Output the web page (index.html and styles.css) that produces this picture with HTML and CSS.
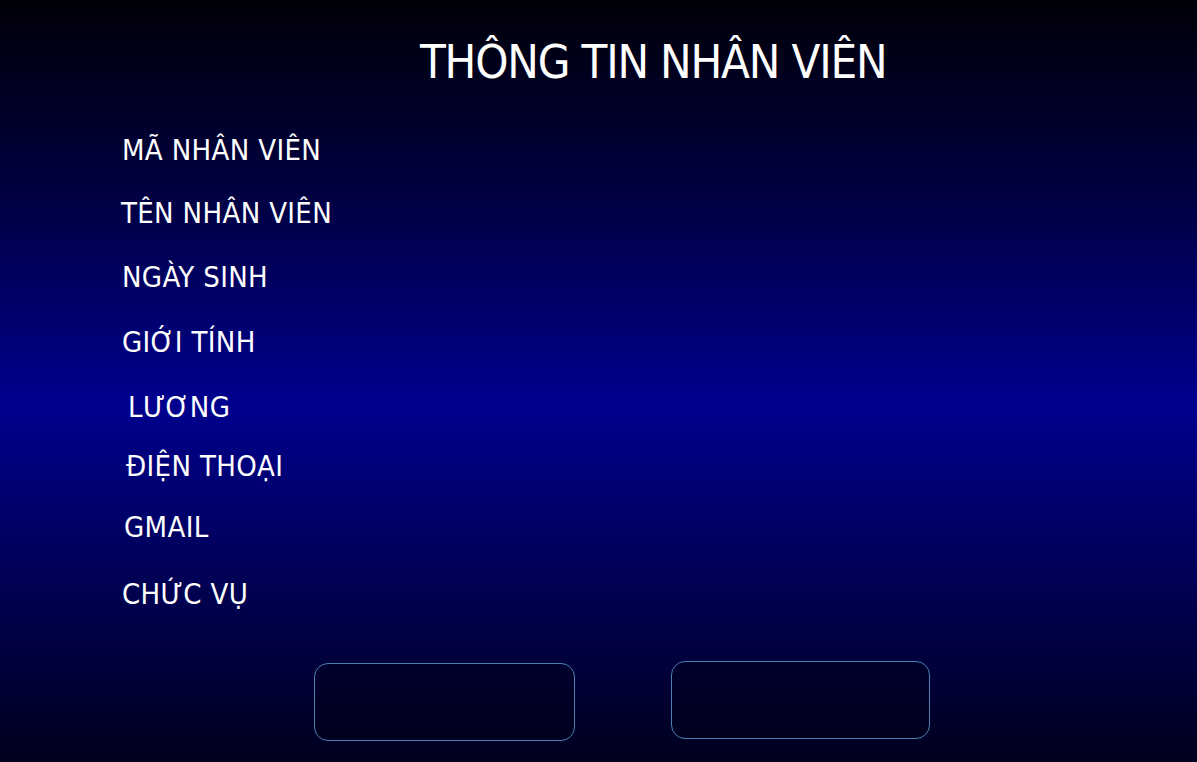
FILE: index.html
```html
<!DOCTYPE html>
<html lang="vi">
<head>
<meta charset="utf-8">
<title>Thông tin nhân viên</title>
<link rel="stylesheet" href="styles.css">
</head>
<body>
<div class="page">
  <h1 class="title">THÔNG TIN NHÂN VIÊN</h1>
  <div class="fields">
    <div class="label l1">MÃ NHÂN VIÊN</div>
    <div class="label l2">TÊN NHÂN VIÊN</div>
    <div class="label l3">NGÀY SINH</div>
    <div class="label l4">GIỚI TÍNH</div>
    <div class="label l5">LƯƠNG</div>
    <div class="label l6">ĐIỆN THOẠI</div>
    <div class="label l7">GMAIL</div>
    <div class="label l8">CHỨC VỤ</div>
  </div>
  <div class="actions">
    <button class="btn btn-a" type="button"></button>
    <button class="btn btn-b" type="button"></button>
  </div>
</div>
</body>
</html>
```
FILE: styles.css
```css
html, body {
  margin: 0;
  padding: 0;
  height: 100%;
}
body {
  background: linear-gradient(to bottom, #000008 0%, #000040 25%, #00008e 53%, #000050 78%, #00001e 100%);
  font-family: "DejaVu Sans Condensed", "DejaVu Sans", Verdana, sans-serif;
  font-stretch: condensed;
  color: #ffffff;
  overflow: hidden;
}
.page {
  width: 1197px;
  height: 762px;
  display: flex;
  flex-direction: column;
}
.title {
  margin: 0;
  padding: 34px 0 0 420px;
  font-size: 47px;
  font-weight: normal;
  line-height: 56px;
  height: 56px;
  letter-spacing: -1.2px;
  white-space: nowrap;
}
.fields {
  display: flex;
  flex-direction: column;
  padding: 44px 0 0 122px;
}
.label {
  font-size: 29px;
  line-height: 32px;
  height: 32px;
  letter-spacing: 0.35px;
  white-space: nowrap;
}
.l1 { margin-top: 0; }
.l2 { margin-top: 31px; margin-left: -1px; }
.l3 { margin-top: 32px; }
.l4 { margin-top: 33px; }
.l5 { margin-top: 33px; margin-left: 6px; }
.l6 { margin-top: 27px; margin-left: 4px; }
.l7 { margin-top: 29px; margin-left: 2px; }
.l8 { margin-top: 35px; }
.actions {
  display: flex;
  align-items: flex-start;
  padding: 0 0 0 314px;
  margin-top: 51px;
  gap: 96px;
}
.btn {
  width: 261px;
  height: 78px;
  border: 1px solid #4d7fb3;
  border-radius: 14px;
  background: rgba(0, 0, 20, 0.35);
  padding: 0;
}
.btn-a { margin-top: 2px; }
.btn-b { width: 259px; }
```
